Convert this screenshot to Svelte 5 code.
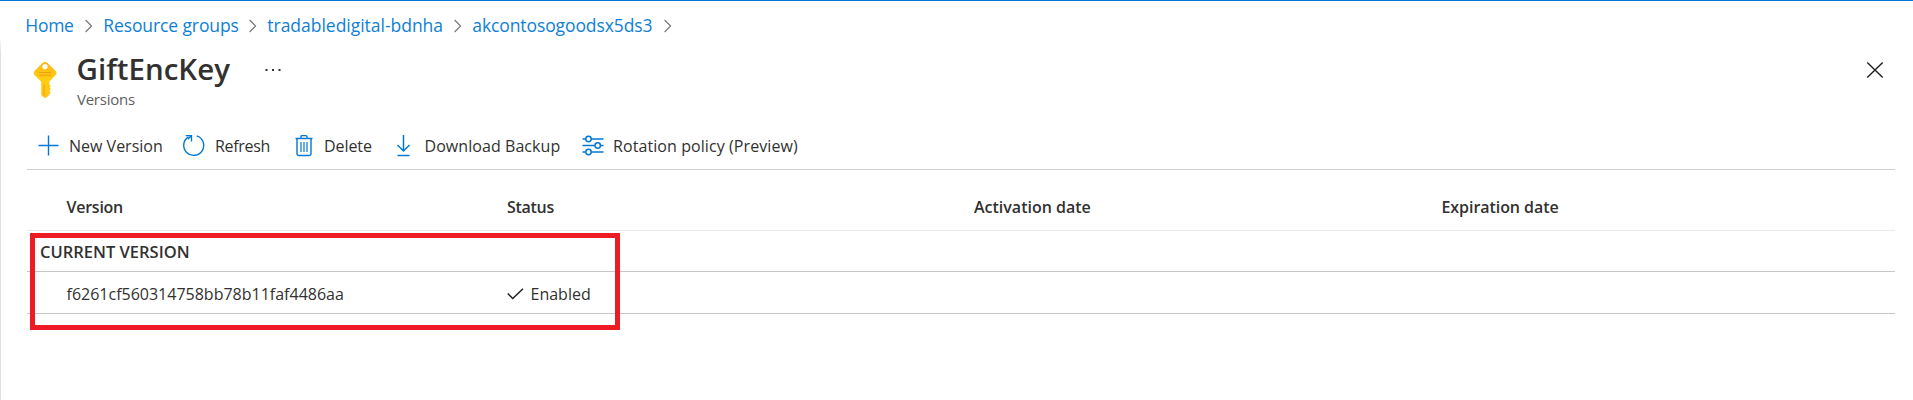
<script>
  const crumbs = [
    { label: 'Home', ls: -0.3 },
    { label: 'Resource groups', ls: -0.11 },
    { label: 'tradabledigital-bdnha', ls: -0.02 },
    { label: 'akcontosogoodsx5ds3', ls: -0.1 }
  ];
  const commands = [
    { label: 'New Version', icon: 'plus', ls: 0 },
    { label: 'Refresh', icon: 'refresh', ls: -0.3 },
    { label: 'Delete', icon: 'trash', ls: -0.07 },
    { label: 'Download Backup', icon: 'download', ls: 0.06 },
    { label: 'Rotation policy (Preview)', icon: 'sliders', ls: 0.08 }
  ];
  const columns = [
    { label: 'Version', ls: -0.25 },
    { label: 'Status', ls: -0.3 },
    { label: 'Activation date', ls: 0 },
    { label: 'Expiration date', ls: -0.06 }
  ];
</script>

<div class="blade">
  <nav class="crumbs">
    {#each crumbs as c}
      <a href="#top" style="letter-spacing:{c.ls}px">{c.label}</a>
      <svg width="8" height="14" viewBox="0 0 8 14"><path d="M.6 1l6 6-6 6" fill="none" stroke="#767472" stroke-width="1.1" /></svg>
    {/each}
  </nav>

  <header>
    <svg class="key" width="24" height="38" viewBox="0 0 24 38">
      <defs>
        <linearGradient id="gold" x1="0" y1="0" x2="0" y2="1">
          <stop offset="0" stop-color="#fdb515" />
          <stop offset=".5" stop-color="#ffcf12" />
          <stop offset="1" stop-color="#fcc419" />
        </linearGradient>
      </defs>
      <path fill="url(#gold)" d="M9.7 1.8Q12 .2 14.3 1.8L22.6 10Q24.4 12 22.6 14L16.3 20.7V23.2L17.800 24.8 16.6 26.4 17.800 28 16.4 30 17.800 31.6 16.4 33.2V34L13.4 36.6Q12 37.4 10.8 36.6L8.2 34V20.7L1.5 14Q-.2 12 1.5 10Z" />
      <circle cx="12" cy="5.600" r="2.600" fill="#fff" />
      <path d="M6.500 11.500h11.300M6.500 14.300h11.300" stroke="#ee9a10" stroke-width="1.100" stroke-linecap="round" opacity=".85" />
      <path d="M11 23.500v11" stroke="#f5a70f" stroke-width="1.100" stroke-linecap="round" />
    </svg>
    <div class="titles">
      <h1>GiftEncKey</h1>
      <p>Versions</p>
    </div>
    <svg class="more" width="16" height="4" viewBox="0 0 16 4"><path d="M.5 1h2v2h-2zM7 1h2v2H7zM13.500 1h2v2h-2z" fill="#323130" /></svg>
    <svg class="close" width="18" height="18" viewBox="0 0 18 18"><path d="M1.300 1.500l15.400 15M16.700 1.500l-15.400 15" stroke="#201f1e" stroke-width="1.400" /></svg>
  </header>

  <div class="toolbar">
    {#each commands as c}
      <svg class="icon" width="24" height="24" viewBox="0 0 24 24" fill="none" stroke="#0078d4" stroke-width="1.400">
        {#if c.icon === 'plus'}
          <path d="M12.500 2.500v20M2.500 12.500h20" />
        {:else if c.icon === 'refresh'}
          <path d="M14.700 2.800A10 10 0 1 1 6.500 3.800" />
          <path d="M3.800 2.700h5.700v5.700M9.200 3L5.800 6.200" stroke-width="1.300" />
        {:else if c.icon === 'trash'}
          <path d="M3.500 5.500h17" stroke-width="1.500" />
          <path d="M9 5V3.600q0-1 1-1h4q1 0 1 1V5" />
          <path d="M5 6v14.800q0 1.700 1.700 1.700h10.600q1.700 0 1.700-1.700V6" />
          <path d="M9 9v10M12 9v10M15 9v10" stroke-width="1.200" />
        {:else if c.icon === 'download'}
          <path d="M12.500 2v15.500M6.500 12l6 6 6-6M6.500 22.500h12" stroke-width="1.500" />
        {:else}
          <path d="M1.500 6h3.200M10 6h12.500M1.500 12.500h12.200M19.500 12.500h3M1.500 19h3.200M10 19h12.500" />
          <g stroke-width="1.500"><circle cx="7.500" cy="6" r="2.700" /><circle cx="16.700" cy="12.500" r="2.700" /><circle cx="7.500" cy="19" r="2.700" /></g>
        {/if}
      </svg>
      <span style="letter-spacing:{c.ls}px">{c.label}</span>
    {/each}
  </div>

  <section class="table">
    <div class="row head">
      {#each columns as c}<span style="letter-spacing:{c.ls}px">{c.label}</span>{/each}
    </div>
    <div class="group">CURRENT VERSION</div>
    <div class="row item">
      <span>f6261cf560314758bb78b11faf4486aa</span>
      <span class="status">
        <svg width="17" height="12" viewBox="0 0 17 12"><path d="M.7 5.500l5 5L16 .8" fill="none" stroke="#201f1e" stroke-width="1.500" /></svg>
        Enabled
      </span>
    </div>
    <div class="marker"></div>
  </section>
</div>

<style>
  :global(body) { margin: 0; background: #fff; }
  .blade {
    box-sizing: border-box;
    height: 400px;
    border-top: 1px solid #0078d4;
    font-family: "Open Sans", "Segoe UI", sans-serif;
    font-size: 16px;
    color: #323130;
    background: linear-gradient(to bottom, transparent 36px, #e1dfdd 52px) 0 0 / 1px 100% no-repeat;
    overflow: hidden;
  }
  svg { display: block; flex: none; }
  .crumbs {
    display: grid;
    grid-template-columns: 59.500px 18.500px 145.500px 18.500px 186.500px 18.500px 191.500px 10px;
    align-items: center;
    height: 49px;
    padding-left: 25.300px;
    font-size: 17.500px;
    white-space: nowrap;
  }
  .crumbs a { padding-bottom: 2px; color: #0f80d7; text-decoration: none; }
  header { display: flex; height: 70px; padding: 0 29px 0 32.500px; }
  .key { margin-top: 11px; }
  .titles { width: 188.500px; margin-left: 20px; }
  h1 { margin: 0; font-size: 29.500px; line-height: 37px; font-weight: 600; letter-spacing: 0; }
  p { margin: 2px 0 0 .5px; font-size: 15px; line-height: 20px; letter-spacing: -.25px; color: #605e5c; }
  .more { margin-top: 17.500px; }
  .close { margin: 10.500px 0 0 auto; }
  .toolbar {
    display: grid;
    grid-template-columns: 33px 113px 33px 77px 32px 67px 33.500px 156px 32.500px 220px;
    align-items: center;
    height: 49px;
    margin: 0 18px 0 27px;
    padding-left: 9px;
    border-bottom: 1px solid #d2d0ce;
    white-space: nowrap;
  }
  .toolbar span { padding-top: 2px; }
  .table { position: relative; margin: 0 18px 0 27px; }
  .row { display: grid; grid-template-columns: 440.500px 467px 467.500px 1fr; align-items: center; padding-left: 39.500px; }
  .head { height: 47px; padding-top: 13px; border-bottom: 1px solid #eaeaea; font-weight: 600; }
  .group { height: 40px; line-height: 41px; padding-left: 13px; border-bottom: 1px solid #c8c6c4; font-size: 16.500px; font-weight: 600; }
  .item { height: 39px; padding-top: 2px; border-bottom: 1px solid #c8c6c4; }
  .status { display: flex; align-items: center; gap: 6.500px; }
  .marker { position: absolute; left: 3px; top: 63px; width: 580px; height: 87px; border: 5px solid #ed1c24; }
</style>
